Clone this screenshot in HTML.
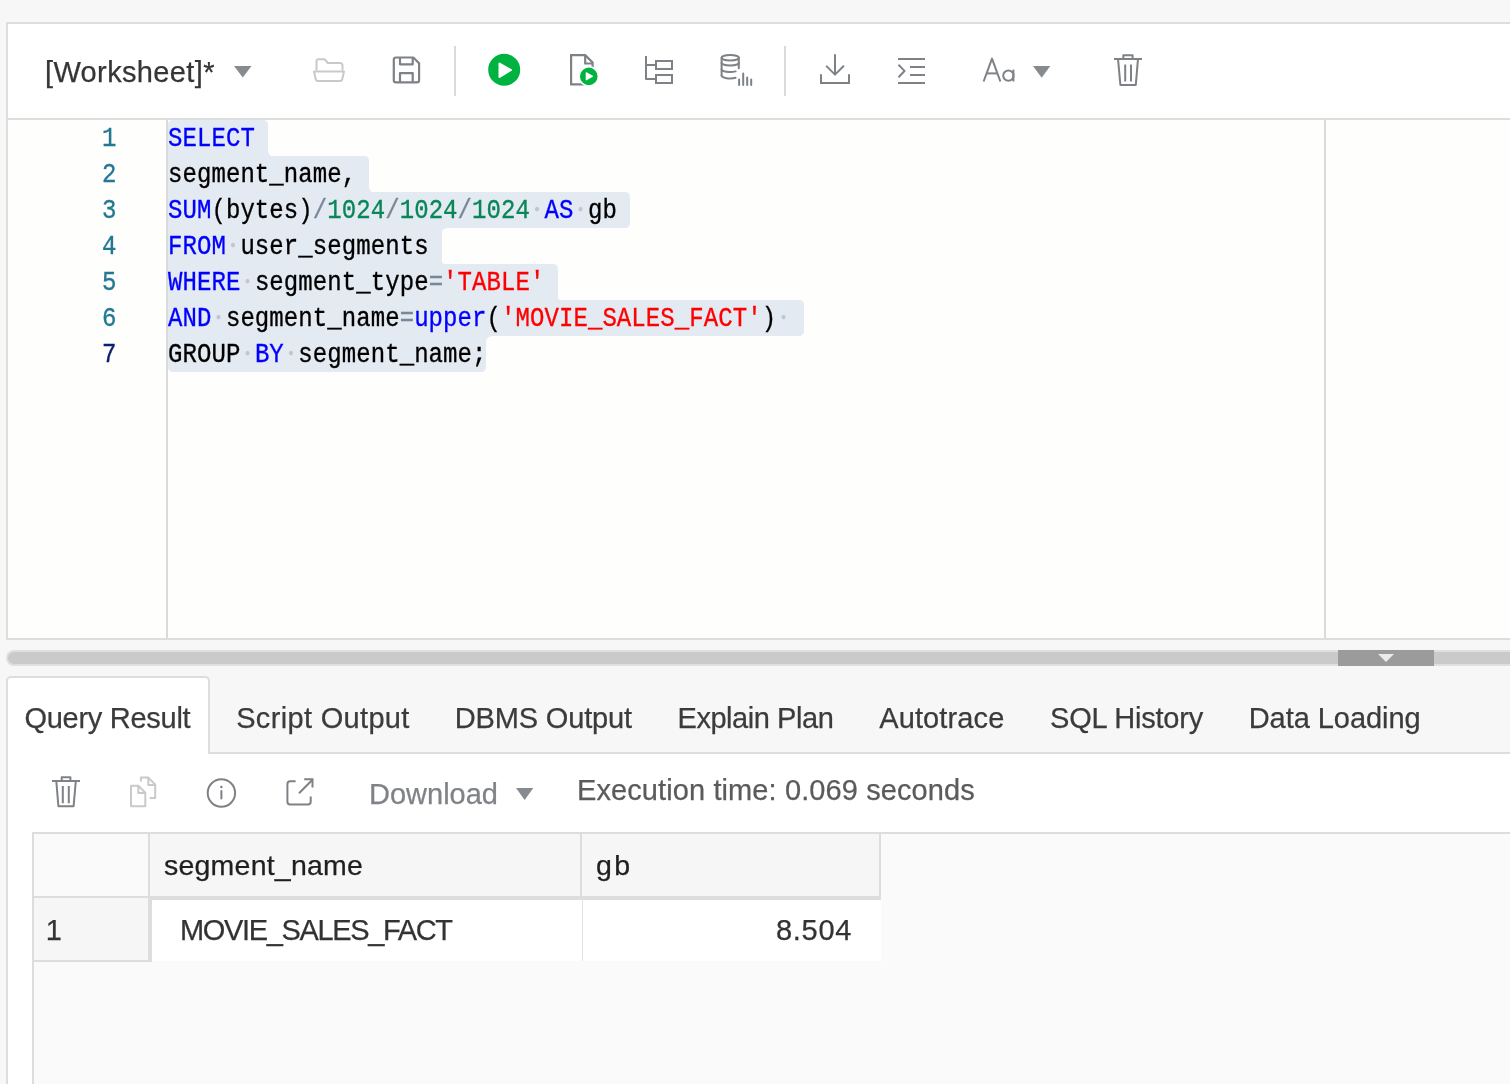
<!DOCTYPE html>
<html><head><meta charset="utf-8">
<style>
html,body{margin:0;padding:0;}
body{width:1510px;height:1084px;overflow:hidden;position:relative;background:#f7f7f7;font-family:"Liberation Sans",sans-serif;}
.a{position:absolute;}
.t{position:absolute;white-space:pre;line-height:1;-webkit-text-stroke:0.25px currentColor;font-family:"Liberation Sans",sans-serif;}
.code{position:absolute;left:168px;-webkit-text-stroke:0.3px currentColor;margin-top:8px;font-family:"Liberation Mono",monospace;font-size:24px;line-height:1;white-space:pre;letter-spacing:0.076px;color:#000;transform:scaleY(1.125);transform-origin:0 18px;}
.code i{font-style:normal}
.ln{position:absolute;left:102px;-webkit-text-stroke:0.3px currentColor;margin-top:8px;font-family:"Liberation Mono",monospace;font-size:24px;line-height:1;color:#237893;transform:scaleY(1.125);transform-origin:0 18px;}
.ln.cur{color:#0b216f}
.sel{position:absolute;left:168px;height:36px;background:#e4eaf2;}
.cc{position:absolute;width:4.5px;height:4.5px;}
.k{color:#0000ff}.n{color:#098658}.o{color:#778899}.s{color:#ff0000}.w{display:inline-block;vertical-align:top;width:14.476px;height:24px;background:radial-gradient(circle at 50% 10.1px,#c3c7cd 1.6px,rgba(195,199,205,0) 2.4px)}
.tab{position:absolute;top:704px;font-size:29px;color:#3b3b3b;}
</style></head><body>
<div id="root" style="position:absolute;left:0;top:0;width:1510px;height:1084px;will-change:transform;overflow:hidden">
<!-- worksheet panel -->
<div class="a" style="left:6px;top:22px;width:1504px;height:618px;background:#dcdddd"></div>
<!-- toolbar -->
<div class="a" style="left:8px;top:24px;width:1502px;height:94px;background:#fff"></div>
<!-- editor -->
<div class="a" style="left:8px;top:120px;width:1502px;height:518px;background:#fefefd"></div>
<div class="a" style="left:166px;top:120px;width:2px;height:518px;background:#dadada"></div>
<div class="a" style="left:1324px;top:120px;width:2px;height:518px;background:#dadada"></div>
<!-- splitter -->
<div class="a" style="left:6px;top:650px;width:1520px;height:16px;border-radius:8px;background:#dfdfdf"></div>
<div class="a" style="left:8px;top:652px;width:1520px;height:12px;border-radius:6px;background:#cacaca"></div>
<div class="a" style="left:1338px;top:650px;width:96px;height:16px;background:#9b9b9b"></div>
<!-- result panel -->
<div class="a" style="left:6px;top:752px;width:1504px;height:332px;background:#dcdddd"></div>
<div class="a" style="left:6px;top:676px;width:200px;height:78px;border:2px solid #dcdddd;border-bottom:none;border-radius:5px 5px 0 0;background:#fff"></div>
<div class="a" style="left:8px;top:754px;width:1502px;height:330px;background:#fff"></div>

<!-- code -->
<div class="sel" style="top:120px;width:100.10px;border-radius:4.5px 4.5px 0px 0px"></div>
<div class="cc" style="left:268.10px;top:151.5px;background:radial-gradient(circle at 100% 0%,#fefefd 4.0px,#e4eaf2 5.0px)"></div>
<div class="sel" style="top:156px;width:201.43px;border-radius:0px 4.5px 0px 0px"></div>
<div class="cc" style="left:369.43px;top:187.5px;background:radial-gradient(circle at 100% 0%,#fefefd 4.0px,#e4eaf2 5.0px)"></div>
<div class="sel" style="top:192px;width:462.00px;border-radius:0px 4.5px 4.5px 0px"></div>
<div class="sel" style="top:228px;width:273.81px;border-radius:0px 0px 0px 0px"></div>
<div class="cc" style="left:441.81px;top:228px;background:radial-gradient(circle at 100% 100%,#fefefd 4.0px,#e4eaf2 5.0px)"></div>
<div class="cc" style="left:441.81px;top:259.5px;background:radial-gradient(circle at 100% 0%,#fefefd 4.0px,#e4eaf2 5.0px)"></div>
<div class="sel" style="top:264px;width:389.62px;border-radius:0px 4.5px 0px 0px"></div>
<div class="cc" style="left:557.62px;top:295.5px;background:radial-gradient(circle at 100% 0%,#fefefd 4.0px,#e4eaf2 5.0px)"></div>
<div class="sel" style="top:300px;width:635.71px;border-radius:0px 4.5px 4.5px 0px"></div>
<div class="sel" style="top:336px;width:318.47px;border-radius:0px 0px 4.5px 4.5px"></div>
<div class="cc" style="left:486.47px;top:336px;background:radial-gradient(circle at 100% 100%,#fefefd 4.0px,#e4eaf2 5.0px)"></div>
<div class="code" style="top:120px"><i class=k>SELECT</i></div>
<div class="ln" style="top:120px">1</div>
<div class="code" style="top:156px">segment_name,</div>
<div class="ln" style="top:156px">2</div>
<div class="code" style="top:192px"><i class=k>SUM</i>(bytes)<i class=o>/</i><i class=n>1024</i><i class=o>/</i><i class=n>1024</i><i class=o>/</i><i class=n>1024</i><i class=w></i><i class=k>AS</i><i class=w></i>gb</div>
<div class="ln" style="top:192px">3</div>
<div class="code" style="top:228px"><i class=k>FROM</i><i class=w></i>user_segments</div>
<div class="ln" style="top:228px">4</div>
<div class="code" style="top:264px"><i class=k>WHERE</i><i class=w></i>segment_type<i class=o>=</i><i class=s>'TABLE'</i></div>
<div class="ln" style="top:264px">5</div>
<div class="code" style="top:300px"><i class=k>AND</i><i class=w></i>segment_name<i class=o>=</i><i class=k>upper</i>(<i class=s>'MOVIE_SALES_FACT'</i>)<i class=w></i></div>
<div class="ln" style="top:300px">6</div>
<div class="code" style="top:336px">GROUP<i class=w></i><i class=k>BY</i><i class=w></i>segment_name;</div>
<div class="ln cur" style="top:336px">7</div>

<!-- toolbar text -->
<div class="t" style="left:45px;top:58px;font-size:29px;color:#363636;letter-spacing:0.36px">[Worksheet]*</div>

<!-- tabs text -->
<div class="t tab" style="left:24.4px;letter-spacing:-0.27px">Query Result</div>
<div class="t tab" style="left:236.2px;letter-spacing:0.33px">Script Output</div>
<div class="t tab" style="left:454.8px;letter-spacing:-0.16px">DBMS Output</div>
<div class="t tab" style="left:677.5px;letter-spacing:-0.45px">Explain Plan</div>
<div class="t tab" style="left:879.2px;letter-spacing:0.12px">Autotrace</div>
<div class="t tab" style="left:1050px;letter-spacing:-0.2px">SQL History</div>
<div class="t tab" style="left:1248.7px;letter-spacing:-0.05px">Data Loading</div>

<!-- result toolbar text -->
<div class="t" style="left:369px;top:780px;font-size:29px;color:#7f8388;">Download</div>
<div class="t" style="left:577px;top:776px;font-size:29px;color:#5b5b5b;letter-spacing:0.1px">Execution time: 0.069 seconds</div>

<!-- grid -->
<div class="a" style="left:32px;top:832px;width:1478px;height:252px;background:#dcdddd"></div>
<div class="a" style="left:34px;top:834px;width:1476px;height:250px;background:#fafafa"></div>
<div class="a" style="left:34px;top:834px;width:114px;height:62px;background:#fafafa"></div>
<div class="a" style="left:148px;top:834px;width:733px;height:66px;background:#dcdddd"></div>
<div class="a" style="left:150px;top:834px;width:430px;height:62px;background:#f6f6f6"></div>
<div class="a" style="left:582px;top:834px;width:297px;height:62px;background:#f6f6f6"></div>
<div class="a" style="left:34px;top:896px;width:118px;height:66px;background:#dcdddd"></div>
<div class="a" style="left:34px;top:898px;width:114px;height:62px;background:#f6f6f6"></div>
<div class="a" style="left:152px;top:900px;width:729px;height:61px;background:#fff"></div>
<div class="a" style="left:582px;top:900px;width:1px;height:61px;background:#e3e3e3"></div>

<div class="t" style="left:164px;top:851px;font-size:28.5px;color:#1f1f1f;letter-spacing:0.22px">segment_name</div>
<div class="t" style="left:596px;top:851px;font-size:28.5px;color:#1f1f1f;letter-spacing:2.5px">gb</div>
<div class="t" style="left:45.8px;top:916px;font-size:29px;color:#333">1</div>
<div class="t" style="left:180px;top:916px;font-size:29px;color:#333;letter-spacing:-1.35px">MOVIE_SALES_FACT</div>
<div class="t" style="left:776px;top:916px;font-size:29px;color:#333;letter-spacing:0.7px">8.504</div>

<!-- icons overlay -->
<svg class="a" style="left:0;top:0" width="1510" height="1084" viewBox="0 0 1510 1084" fill="none" stroke-linecap="butt" stroke-linejoin="round">
 <!-- worksheet dropdown -->
 <polygon points="234,66 251.5,66 242.75,77.6" fill="#878b8f"/>
 <!-- folder (disabled) -->
 <g stroke="#c8c9cb" stroke-width="2">
  <path d="M316.5,70.5 V61.2 Q316.5,59.2 318.5,59.2 H324.5 L327.8,63 H340 Q342.5,63 342.5,65.5 V70.5"/>
  <path d="M314,71.5 H344 L342.3,79 Q341.9,81 339.8,81 H318.2 Q316.1,81 315.7,79 Z"/>
 </g>
 <g stroke="#7e8286" stroke-width="2.2">
  <!-- save -->
  <path d="M393.8,59.7 Q393.8,57.5 396,57.5 H413.3 L419.1,63.3 V80.2 Q419.1,82.4 416.9,82.4 H396 Q393.8,82.4 393.8,80.2 Z"/>
  <path d="M400,57.5 V64.3 H412.7 V57.5"/>
  <path d="M400,82.4 V73.1 H412.7 V82.4"/>
 </g>
 <rect x="454" y="46" width="2" height="50" fill="#dadada"/>
 <!-- run -->
 <circle cx="504.2" cy="69.8" r="16" fill="#00b340"/>
 <path d="M499.3,63.2 L511.2,70 L499.3,77.2 Z" fill="#fff" stroke="#fff" stroke-width="1.6"/>
 <!-- run script -->
 <g stroke="#7e8286" stroke-width="2.2">
  <path d="M571.1,84.4 V55.1 H585.2 L592.6,62.5 V84.4 Z" stroke-linejoin="miter"/>
  <path d="M585.2,55.1 V63.5 H592.6" stroke-linejoin="miter"/>
 </g>
 <circle cx="588.8" cy="76.4" r="9.6" fill="#00b340" stroke="#fff" stroke-width="1.6"/>
 <path d="M586.3,72.8 L592.4,76.3 L586.3,79.8 Z" fill="#fff" stroke="#fff" stroke-width="1.2"/>
 <!-- explain -->
 <g stroke="#7e8286" stroke-width="2">
  <path d="M646,56 V79 H656"/>
  <path d="M646,65 H656"/>
  <rect x="656" y="61" width="16" height="8" stroke-linejoin="miter"/>
  <rect x="656" y="75" width="16" height="8" stroke-linejoin="miter"/>
 </g>
 <!-- autotrace db -->
 <g stroke="#7e8286" stroke-width="2" stroke-linecap="round">
  <ellipse cx="730.2" cy="57.8" rx="8.6" ry="2.8"/>
  <path d="M721.6,57.8 V75.3"/>
  <path d="M738.8,57.8 V68.2"/>
  <path d="M721.6,62.8 A8.6,2.8 0 0 0 738.8,62.8"/>
  <path d="M721.6,69.2 A8.6,2.8 0 0 0 735.6,71.4"/>
  <path d="M721.6,75.6 A8.6,2.8 0 0 0 735.6,77.8"/>
  <path d="M739.1,79.4 V85 M743.2,73.5 V85 M747.2,77.5 V85 M751.2,79.4 V85"/>
 </g>
 <rect x="784" y="46" width="2" height="50" fill="#dadada"/>
 <g stroke="#7e8286" stroke-width="2">
  <!-- download -->
  <path d="M835,55 V74" stroke-linecap="round"/>
  <path d="M826.7,66.4 L835,74.6 L843.4,66.2" stroke-linecap="round"/>
  <path d="M821,75 V83 H849 V75" stroke-linecap="round" stroke-linejoin="miter"/>
  <!-- format -->
  <path d="M898,59 H925 M910,67 H925 M910,75 H925 M898,83 H925"/>
  <path d="M898.5,64.8 L904.5,70.9 L898.5,77.2" stroke-linejoin="miter"/>
  <!-- Aa -->
  <path d="M983.6,81.5 L992,58.6 L1000.4,81.5"/>
  <path d="M986.6,73.4 H997.4"/>
  <circle cx="1008.4" cy="75.6" r="5.2"/>
  <path d="M1013.4,69.6 V81.5"/>
 </g>
 <polygon points="1033,66.1 1050.3,66.1 1041.65,77.7" fill="#878b8f"/>
 <g stroke="#7e8286" stroke-width="2">
  <!-- trash -->
  <path d="M1123.3,58.8 V55.2 H1132.6 V58.8"/>
  <path d="M1114,59 H1142"/>
  <path d="M1118,58.8 L1120.4,84.9 H1135.8 L1138,58.8"/>
  <path d="M1125.2,64.5 V81.5 M1131,64.5 V81.5"/>
 </g>

 <!-- splitter triangle -->
 <polygon points="1378,654 1394,654 1386,662" fill="#ebebeb"/>

 <!-- result toolbar -->
 <g stroke="#7e8286" stroke-width="2">
  <path d="M61.7,781 V777.2 H70.4 V781"/>
  <path d="M52,781 H80"/>
  <path d="M56.3,781 L58.4,806.2 H73.6 L75.8,781"/>
  <path d="M62.8,786 V803.3 M68.8,786 V803.3"/>
 </g>
 <g stroke="#c8c9cb" stroke-width="2">
  <path d="M131,785.8 H138.3 L145.3,792.8 V806.2 H131 Z"/>
  <path d="M138.3,785.8 V793 H145.3"/>
  <path d="M140.9,781.4 V777.6 H148.3 L155.2,784.5 V798 H149.8"/>
  <path d="M148.3,777.6 V785 H155.2"/>
 </g>
 <g stroke="#7e8286" stroke-width="2">
  <circle cx="221.4" cy="793" r="13.7"/>
  <circle cx="221.4" cy="787.1" r="1.25" fill="#7e8286" stroke="none"/>
  <path d="M221.4,791 V798.4" stroke-linecap="round"/>
  <path d="M295.6,781.3 H290.2 Q287.4,781.3 287.4,784.1 V801.7 Q287.4,804.5 290.2,804.5 H307.9 Q310.7,804.5 310.7,801.7 V796.4"/>
  <path d="M299,793.2 L312.2,780"/>
  <path d="M304.2,779.3 H312.5 V787.6" stroke-linejoin="miter"/>
 </g>
 <polygon points="516,788 533.3,788 524.65,800" fill="#878b8f"/>
</svg>
</div>
</body></html>
